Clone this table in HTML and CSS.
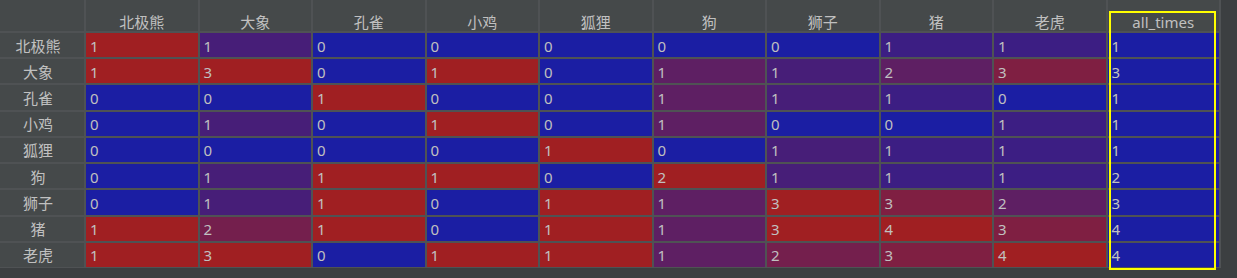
FILE: index.html
```html
<!DOCTYPE html>
<html lang="zh">
<head>
<meta charset="utf-8">
<title>heatmap</title>
<link rel="stylesheet" href="styles.css">
</head>
<body>
<div class="frame">
  <div class="grid">
    <div class="hd corner"></div>
    <div class="hd">北极熊</div><div class="hd">大象</div><div class="hd">孔雀</div><div class="hd">小鸡</div><div class="hd">狐狸</div><div class="hd">狗</div><div class="hd">狮子</div><div class="hd">猪</div><div class="hd">老虎</div><div class="hd">all_times</div>

    <div class="rh">北极熊</div>
    <div class="c c100">1</div><div class="c c33">1</div><div class="c c0">0</div><div class="c c0">0</div><div class="c c0">0</div><div class="c c0">0</div><div class="c c0">0</div><div class="c c25">1</div><div class="c c25">1</div><div class="c c0">1</div>

    <div class="rh">大象</div>
    <div class="c c100">1</div><div class="c c100">3</div><div class="c c0">0</div><div class="c c100">1</div><div class="c c0">0</div><div class="c c50">1</div><div class="c c33">1</div><div class="c c50">2</div><div class="c c75">3</div><div class="c c0">3</div>

    <div class="rh">孔雀</div>
    <div class="c c0">0</div><div class="c c0">0</div><div class="c c100">1</div><div class="c c0">0</div><div class="c c0">0</div><div class="c c50">1</div><div class="c c33">1</div><div class="c c25">1</div><div class="c c0">0</div><div class="c c0">1</div>

    <div class="rh">小鸡</div>
    <div class="c c0">0</div><div class="c c33">1</div><div class="c c0">0</div><div class="c c100">1</div><div class="c c0">0</div><div class="c c50">1</div><div class="c c0">0</div><div class="c c0">0</div><div class="c c25">1</div><div class="c c0">1</div>

    <div class="rh">狐狸</div>
    <div class="c c0">0</div><div class="c c0">0</div><div class="c c0">0</div><div class="c c0">0</div><div class="c c100">1</div><div class="c c0">0</div><div class="c c33">1</div><div class="c c25">1</div><div class="c c25">1</div><div class="c c0">1</div>

    <div class="rh">狗</div>
    <div class="c c0">0</div><div class="c c33">1</div><div class="c c100">1</div><div class="c c100">1</div><div class="c c0">0</div><div class="c c100">2</div><div class="c c33">1</div><div class="c c25">1</div><div class="c c25">1</div><div class="c c0">2</div>

    <div class="rh">狮子</div>
    <div class="c c0">0</div><div class="c c33">1</div><div class="c c100">1</div><div class="c c0">0</div><div class="c c100">1</div><div class="c c50">1</div><div class="c c100">3</div><div class="c c75">3</div><div class="c c50">2</div><div class="c c0">3</div>

    <div class="rh">猪</div>
    <div class="c c100">1</div><div class="c c67">2</div><div class="c c100">1</div><div class="c c0">0</div><div class="c c100">1</div><div class="c c50">1</div><div class="c c100">3</div><div class="c c100">4</div><div class="c c75">3</div><div class="c c0">4</div>

    <div class="rh">老虎</div>
    <div class="c c100">1</div><div class="c c100">3</div><div class="c c0">0</div><div class="c c100">1</div><div class="c c100">1</div><div class="c c50">1</div><div class="c c67">2</div><div class="c c75">3</div><div class="c c100">4</div><div class="c c0">4</div>
  </div>
  <div class="highlight"></div>
</div>
</body>
</html>
```

FILE: styles.css
```css
html, body {
  margin: 0;
  padding: 0;
  background: #3c3f41;
}

.frame {
  position: relative;
  width: 1237px;
  height: 278px;
  background: #3c3f41;
  font-family: "Noto Sans", "Noto Sans CJK SC", sans-serif;
  font-size: 15px;
  color: #c0c0c0;
}

.grid {
  display: grid;
  width: 1219px;
  height: 267px;
  grid-template-columns: 84px repeat(10, 1fr);
  grid-template-rows: 31px repeat(9, 1fr);
  gap: 2px;
  padding-right: 2px;
  background: #4f5254;
  border-bottom: 1px solid #4f5254;
}

.hd {
  background: #45494a;
  display: flex;
  align-items: flex-end;
  justify-content: center;
  padding-bottom: 0;
  line-height: 17px;
  white-space: nowrap;
}

.rh {
  background: #45494a;
  display: flex;
  align-items: center;
  justify-content: center;
  padding-right: 8px;
  white-space: nowrap;
}

.c {
  display: flex;
  align-items: center;
  padding-left: 4px;
  padding-top: 1px;
}

.c0   { background: rgb(27, 30, 163); }
.c25  { background: rgb(60, 30, 131); }
.c33  { background: rgb(71, 30, 120); }
.c50  { background: rgb(94, 31, 99); }
.c67  { background: rgb(116, 31, 77); }
.c75  { background: rgb(127, 31, 66); }
.c100 { background: rgb(160, 31, 34); }

.highlight {
  position: absolute;
  left: 1109px;
  top: 11px;
  width: 103px;
  height: 255px;
  border: 2px solid #ffff00;
}
```
